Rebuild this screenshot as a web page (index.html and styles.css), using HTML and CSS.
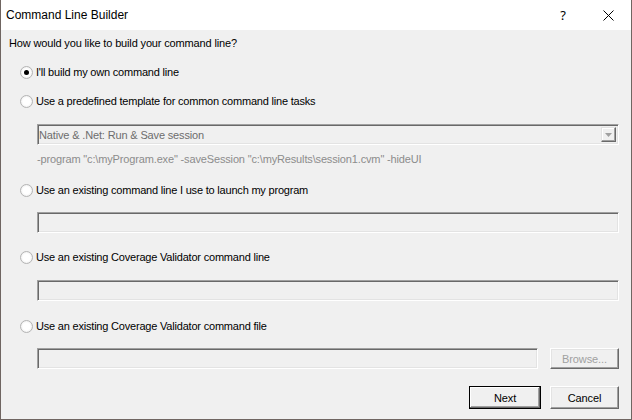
FILE: index.html
```html
<!DOCTYPE html>
<html>
<head>
<meta charset="utf-8">
<link rel="stylesheet" href="styles.css">
</head>
<body>
<div class="window">
  <div class="titlebar">
    <span class="title">Command Line Builder</span>
    <span class="tb-btn help">?</span>
    <span class="tb-btn close">
      <svg width="11" height="11" viewBox="0 0 11 11"><path d="M0.5 0.5 L10.5 10.5 M10.5 0.5 L0.5 10.5" stroke="#000" stroke-width="1" fill="none"/></svg>
    </span>
  </div>
  <div class="content">
    <div class="prompt">How would you like to build your command line?</div>

    <div class="option opt1"><span class="radio checked"></span><span>I'll build my own command line</span></div>
    <div class="option opt2"><span class="radio"></span><span>Use a predefined template for common command line tasks</span></div>
    <div class="field combo">
      <span class="combo-text">Native &amp; .Net: Run &amp; Save session</span>
      <span class="drop"><svg width="7" height="4" viewBox="0 0 7 4"><path d="M0 0 H7 L3.5 4 Z" fill="#a0a0a0"/></svg></span>
    </div>
    <div class="hint">-program "c:\myProgram.exe" -saveSession "c:\myResults\session1.cvm" -hideUI</div>

    <div class="option opt3"><span class="radio"></span><span>Use an existing command line I use to launch my program</span></div>
    <div class="field f1"></div>

    <div class="option opt4"><span class="radio"></span><span>Use an existing Coverage Validator command line</span></div>
    <div class="field f2"></div>

    <div class="option opt5"><span class="radio"></span><span>Use an existing Coverage Validator command file</span></div>
    <div class="filerow">
      <div class="field f3"></div>
      <div class="btn disabled">Browse...</div>
    </div>

    <div class="actions">
      <div class="btn default">Next</div>
      <div class="btn">Cancel</div>
    </div>
  </div>
</div>
</body>
</html>
```

FILE: styles.css
```css
html, body {
  margin: 0;
  padding: 0;
  background: #f0f0f0;
}
.window {
  width: 632px;
  height: 420px;
  box-sizing: border-box;
  border-left: 1px solid #6f6561;
  border-right: 1px solid #6f6561;
  border-bottom: 1px solid #6f6561;
  background: #f0f0f0;
  font-family: "Liberation Sans", Arial, sans-serif;
  font-size: 11px;
  color: #000;
}
.titlebar {
  height: 30px;
  background: #fff;
  display: flex;
  align-items: center;
}
.title {
  font-size: 12px;
  padding-left: 5px;
  flex: 1;
}
.tb-btn {
  width: 46px;
  height: 30px;
  display: flex;
  align-items: center;
  justify-content: center;
}
.help {
  font-family: "Noto Sans", "Liberation Sans", sans-serif;
  font-size: 13px;
  padding-left: 2px;
  box-sizing: border-box;
}
.content {
  padding: 0 12px 0 0;
}
.prompt {
  margin: 6px 0 0 8px;
  line-height: 14px;
  letter-spacing: -0.15px;
}
.option {
  display: flex;
  align-items: center;
  height: 14px;
  margin-left: 19px;
  letter-spacing: -0.2px;
}
.opt1 { margin-top: 15px; }
.opt2 { margin-top: 15px; }
.opt3 { margin-top: 17px; }
.opt4 { margin-top: 17px; }
.opt5 { margin-top: 18px; }
.radio {
  width: 11px;
  height: 11px;
  border-radius: 50%;
  border: 1px solid #b4b4b4;
  background: radial-gradient(circle, #fff 45%, #f2f2f2 70%, #e0e0e0 100%);
  box-sizing: content-box;
  margin-right: 3px;
  display: flex;
  align-items: center;
  justify-content: center;
}
.radio.checked::after {
  content: "";
  width: 5px;
  height: 5px;
  border-radius: 50%;
  background: #000;
}
.field {
  height: 21px;
  box-sizing: border-box;
  margin-left: 36px;
  border: 1px solid;
  border-color: #a0a0a0 #ffffff #ffffff #a0a0a0;
  box-shadow: inset 1px 1px 0 #696969, inset -1px -1px 0 #e3e3e3;
  background: #f0f0f0;
}
.combo {
  margin-top: 16px;
  display: flex;
  align-items: center;
  padding: 0 2px 0 1px;
}
.combo-text {
  flex: 1;
  color: #6d6d6d;
  letter-spacing: -0.15px;
}
.drop {
  width: 15px;
  height: 15px;
  box-sizing: border-box;
  border: 1px solid;
  border-color: #e3e3e3 #696969 #696969 #e3e3e3;
  box-shadow: inset -1px -1px 0 #a0a0a0, inset 1px 1px 0 #fff;
  display: flex;
  align-items: center;
  justify-content: center;
}
.hint {
  margin: 7px 0 0 36px;
  line-height: 14px;
  color: #8c8c8c;
  letter-spacing: -0.15px;
}
.f1 { margin-top: 15px; }
.f2 { margin-top: 16px; }
.filerow {
  display: flex;
  margin-top: 15px;
  margin-left: 36px;
  gap: 12px;
}
.filerow .f3 {
  margin-left: 0;
  flex: 1;
}
.btn {
  width: 69px;
  height: 21px;
  box-sizing: border-box;
  border: 1px solid;
  border-color: #fff #696969 #696969 #fff;
  box-shadow: inset -1px -1px 0 #a0a0a0, inset 1px 1px 0 #e3e3e3;
  display: flex;
  align-items: center;
  justify-content: center;
  background: #f0f0f0;
  letter-spacing: -0.1px;
}
.btn.disabled {
  color: #a0a0a0;
}
.actions {
  display: flex;
  justify-content: flex-end;
  gap: 9px;
  margin-top: 17px;
}
.actions .btn {
  height: 23px;
}
.btn.default {
  width: 72px;
  border: 1px solid #000;
  box-shadow: inset -1px -1px 0 #696969, inset 1px 1px 0 #fff, inset -2px -2px 0 #a0a0a0;
}
```
